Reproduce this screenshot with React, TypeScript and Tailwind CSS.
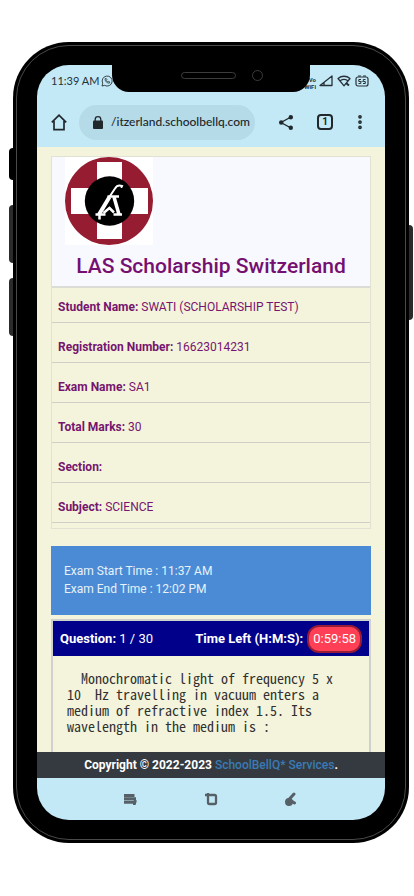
import { EllipsisVertical } from "lucide-react";
import React from "react";

const details = [
  { label: "Student Name:", value: "SWATI (SCHOLARSHIP TEST)" },
  { label: "Registration Number:", value: "16623014231" },
  { label: "Exam Name:", value: "SA1" },
  { label: "Total Marks:", value: "30" },
  { label: "Section:", value: "" },
  { label: "Subject:", value: "SCIENCE" },
];

const SchoolLogo = () => (
  <svg viewBox="0 0 88 88" className="block w-[88px] h-[88px] bg-white" role="img" aria-label="LAS logo">
    <circle cx="44" cy="44" r="44" fill="#961c31" />
    <path d="M32 5h25v77H32zM6 31h77v26H6z" fill="#fff" />
    <circle cx="44.500" cy="44" r="24.700" fill="#000" />
    {/* Scythe and letter emblem */}
    <g fill="none" stroke="#fff">
      <path d="M42.500 39.500h11.500" strokeWidth="2.500" />
      <path d="M45 39l5-7.500c1.500-2.500 4-3.500 7-2.500l-.5 1" strokeWidth="2" strokeLinecap="round" />
      <path d="M44.500 40L34 57.500" strokeWidth="4" />
      <path d="M49 40l5 17.500" strokeWidth="3.500" />
      <path d="M30.500 57.500h10M48.500 57.500h8.500" strokeWidth="2.500" />
      <path d="M38.500 56l6-5 4.500 4.500" strokeWidth="2.500" />
      <path d="M34.500 57v5.500" strokeWidth="2.500" />
    </g>
  </svg>
);

const WhatsAppIcon = () => (
  <svg viewBox="0 0 12 12" className="w-3 h-3 shrink-0" fill="none" stroke="#263238">
    <path d="M1 11l.7-2.700A5 5 0 1 1 3.700 10.400z" strokeWidth="0.900" />
    <path d="M4 3.800c0 2.500 2 4.400 4.300 4.400l.6-1.200-1.300-.7-.7.7c-.8-.3-1.300-.9-1.600-1.600l.6-.7-.6-1.200z" strokeWidth="0.800" />
  </svg>
);

const StatusIcons = () => (
  <div className="flex items-center gap-1">
    <svg viewBox="0 0 14 12" className="w-3.5 h-3" fill="none" stroke="#263238" strokeWidth="1.300" strokeLinejoin="round">
      <path d="M1 10.500L13 1v9.500zM5 7.500v3" />
    </svg>
    <svg viewBox="0 0 14 12" className="w-3.5 h-3" fill="none" stroke="#263238" strokeWidth="1.300" strokeLinejoin="round">
      <path d="M1 3.500c3.500-3 8.500-3 12 0L7 10.800zM3.500 5.500c2-1.300 5-1.300 7 0" />
      <path d="M9 8l3 2.500" strokeWidth="2" />
    </svg>
    <svg viewBox="0 0 14 12" className="w-3.5 h-3" fill="none" stroke="#263238" strokeWidth="1.200">
      <rect x="1" y="2" width="12" height="9" rx="2" />
      <path d="M3 1h3M8 1h3M6 4.500H3.800v2h2v2H3.500M10.500 4.500H8.300v2h2v2H8M7 6v1" strokeWidth="1" />
    </svg>
  </div>
);

const StatusBar = () => (
  <div className="flex items-center justify-between h-8 pl-3.5 pr-4">
    <div className="flex items-center gap-0.5 font-['Lato',sans-serif] text-[11px] text-[#263238]">
      <span className="whitespace-nowrap">11:39 AM</span>
      <WhatsAppIcon />
    </div>
    <div className="flex items-center gap-[3px]">
      <div className="flex flex-col items-end pt-1 text-[6px] leading-[7px] text-[#263238] font-bold">
        <span>Vo</span>
        <span>WiFi</span>
      </div>
      <StatusIcons />
    </div>
  </div>
);

const BrowserBar = () => (
  <div className="flex items-center h-[50px] pl-3.5 pr-4">
    <button aria-label="Home" className="shrink-0">
      <svg viewBox="0 0 16 17" className="w-4 h-[17px]" fill="none" stroke="#20282c" strokeWidth="1.700">
        <path d="M.8 8.300L8 1.200l7.200 7.100M3 7v8.700h10V7" />
      </svg>
    </button>
    <div className="flex flex-1 min-w-0 items-center gap-2 h-[35px] ml-3 pl-3.5 rounded-full bg-[#b5dae8]">
      <svg viewBox="0 0 10 13" className="w-2.5 h-[13px] shrink-0">
        <path d="M2.200 5V3.500a2.800 2.800 0 0 1 5.600 0V5" fill="none" stroke="#20282c" strokeWidth="1.300" />
        <rect y="4.500" width="10" height="8.500" rx="1" fill="#20282c" />
      </svg>
      <input
        aria-label="Address"
        defaultValue="/itzerland.schoolbellq.com"
        className="w-full min-w-0 bg-transparent font-['Lato',sans-serif] font-medium text-xs text-[#20282c] outline-none"
      />
    </div>
    <div className="flex items-center shrink-0 ml-6">
      <button aria-label="Share">
        <svg viewBox="0 0 14 15" className="w-3.5 h-[15px]" fill="#20282c">
          <path d="M12 2L2 7.500 12 13" fill="none" stroke="#20282c" strokeWidth="1.400" />
          <circle cx="11.800" cy="2.200" r="2.200" />
          <circle cx="2.200" cy="7.500" r="2.200" />
          <circle cx="11.800" cy="12.800" r="2.200" />
        </svg>
      </button>
      <button
        aria-label="Tabs"
        className="flex items-center justify-center w-4 h-4 ml-6 rounded-[4px] border-2 border-[#20282c] text-[10px] leading-none font-bold text-[#20282c]"
      >
        1
      </button>
      <button aria-label="Menu" className="ml-[18px]">
        <EllipsisVertical className="w-[18px] h-[18px]" strokeWidth={3} color="#20282c" />
      </button>
    </div>
  </div>
);

const ExamPage = () => (
  <main className="bg-[#f4f4dc] px-3.5 pt-[9px]">
    {/* School and candidate details */}
    <section className="border border-[#e2e2d4] pb-[5px] text-xs leading-[18px] text-[#76156f]">
      <div className="h-[131px] bg-[#f8f8ff] border-b-2 border-[#dcdcd6]">
        <div className="pl-[13px]">
          <SchoolLogo />
        </div>
        <h1 className="mt-[5px] text-center text-[21px] leading-8 font-medium text-[#750f70] whitespace-nowrap">
          LAS Scholarship Switzerland
        </h1>
      </div>
      {details.map((item) => (
        <p key={item.label} className="px-1.5 pt-[15px] pb-1.5 border-b border-[#cfcfc8] first-of-type:pt-2.5">
          <b>{item.label}</b> {item.value}
        </p>
      ))}
    </section>

    {/* Exam window */}
    <section className="mt-[17px] px-[13px] pt-4 pb-[17px] bg-[#4b8bd6] text-xs leading-[18px] text-[#e8f2f8]">
      <p>Exam Start Time : 11:37 AM</p>
      <p>Exam End Time : 12:02 PM</p>
    </section>

    {/* Question */}
    <section className="mt-1 border-t-2 border-x-2 border-[#d0d0cc]">
      <div className="flex items-center justify-between h-[35px] pl-[7px] pr-[7px] bg-[#00008b] text-[13px] text-white whitespace-nowrap">
        <p>
          <b>Question:</b> 1 / 30
        </p>
        <p className="flex items-center gap-1">
          <b>Time Left (H:M:S):</b>
          <span className="px-1 py-0.5 leading-5 rounded-xl border-2 border-[#941c37] bg-[#ff3f55]">0:59:58</span>
        </p>
      </div>
      <p className="pl-3.5 pt-3.5 pb-[18px] font-['Noto_Sans_Mono_CJK_SC','DejaVu_Sans_Mono',monospace] text-[14px] leading-4 text-[#303030] whitespace-pre">
        {"  Monochromatic light of frequency 5 x\n10  Hz travelling in vacuum enters a\nmedium of refractive index 1.5. Its\nwavelength in the medium is :"}
      </p>
    </section>
  </main>
);

const NavBar = () => (
  <nav className="flex items-center justify-between h-[42px] pl-[86px] pr-[88px]">
    <button aria-label="Recent apps">
      <svg viewBox="0 0 14 12" className="w-3.5 h-3" fill="none" stroke="#566067" strokeWidth="2.900">
        <path d="M1 2.500h10.500M1 5.800h12M1 9.200h11" />
        <path d="M10 10.500h1.500L12.500 7" />
      </svg>
    </button>
    <button aria-label="Home screen">
      <svg viewBox="0 0 14 14" className="w-3.5 h-3.5" fill="none" stroke="#566067" strokeWidth="2.300">
        <path d="M3 3h7.500a1.500 1.500 0 0 1 1.500 1.500v6a1.500 1.500 0 0 1-1.500 1.500h-5A1.500 1.500 0 0 1 4 10.500V1M1 3h3" />
      </svg>
    </button>
    <button aria-label="Back">
      <svg viewBox="0 0 12 14" className="w-3 h-3.5" fill="none" stroke="#566067" strokeWidth="3" strokeLinecap="round">
        <path d="M9 2L4 7.500l5.500 3.500" />
        <circle cx="4" cy="10" r="2.500" fill="#566067" />
      </svg>
    </button>
  </nav>
);

const Notch = () => (
  <div className="absolute top-0 inset-x-[75px] flex items-start h-[27px] pl-[69px] pt-[5px] rounded-b-[17px] bg-black">
    <div className="w-[55px] h-[7px] mt-0.5 rounded-full border border-[#3c3c3c]" />
    <div className="w-[11px] h-[11px] ml-4 rounded-full border border-[#3c3c3c]" />
  </div>
);

const App = () => {
  return (
    <div className="min-h-screen bg-white pt-[42px] pb-[53px] pl-[13px] pr-[5px] font-['Roboto',sans-serif]">
      <div className="relative">
        {/* Side keys */}
        <div className="absolute -left-1 top-[106px] w-1 h-8 rounded-l bg-black" />
        <div className="absolute -left-1 top-[163px] w-1 h-[58px] rounded-l bg-[#2b2b2b]" />
        <div className="absolute -left-1 top-[236px] w-1 h-[58px] rounded-l bg-[#2b2b2b]" />
        <div className="absolute -right-1 top-[183px] w-1 h-[95px] rounded-r bg-[#2b2b2b]" />

        <div className="rounded-[56px] bg-black p-[3px]">
          <div className="rounded-[53px] border border-[#4a4a4a] px-5 pt-[19px] pb-[19px]">
            <div className="relative overflow-hidden rounded-[32px] bg-[#c4e9f6]">
              <StatusBar />
              <BrowserBar />
              <ExamPage />
              <footer className="py-1 bg-[#343a40] text-center text-xs leading-[18px] font-bold text-white">
                Copyright © 2022-2023{" "}
                <a href="#services" className="font-medium text-[#3a7ab5]">
                  SchoolBellQ* Services
                </a>
                .
              </footer>
              <NavBar />
              <Notch />
            </div>
          </div>
        </div>
      </div>
    </div>
  );
};

export default App;
